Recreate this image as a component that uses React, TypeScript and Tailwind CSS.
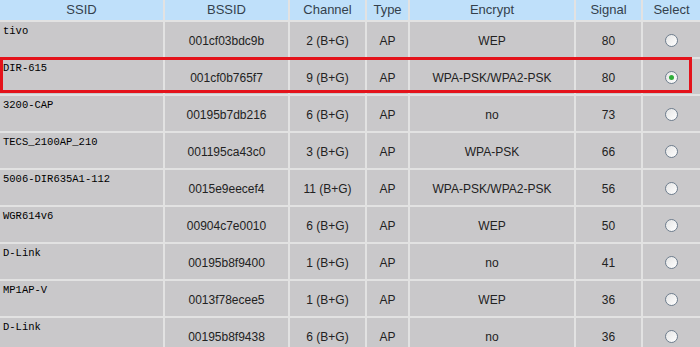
import React from "react";

type Network = {
  ssid: string;
  bssid: string;
  channel: string;
  type: string;
  encrypt: string;
  signal: number;
};

const networks: Network[] = [
  { ssid: "tivo", bssid: "001cf03bdc9b", channel: "2 (B+G)", type: "AP", encrypt: "WEP", signal: 80 },
  { ssid: "DIR-615", bssid: "001cf0b765f7", channel: "9 (B+G)", type: "AP", encrypt: "WPA-PSK/WPA2-PSK", signal: 80 },
  { ssid: "3200-CAP", bssid: "00195b7db216", channel: "6 (B+G)", type: "AP", encrypt: "no", signal: 73 },
  { ssid: "TECS_2100AP_210", bssid: "001195ca43c0", channel: "3 (B+G)", type: "AP", encrypt: "WPA-PSK", signal: 66 },
  { ssid: "5006-DIR635A1-112", bssid: "0015e9eecef4", channel: "11 (B+G)", type: "AP", encrypt: "WPA-PSK/WPA2-PSK", signal: 56 },
  { ssid: "WGR614v6", bssid: "00904c7e0010", channel: "6 (B+G)", type: "AP", encrypt: "WEP", signal: 50 },
  { ssid: "D-Link", bssid: "00195b8f9400", channel: "1 (B+G)", type: "AP", encrypt: "no", signal: 41 },
  { ssid: "MP1AP-V", bssid: "0013f78ecee5", channel: "1 (B+G)", type: "AP", encrypt: "WEP", signal: 36 },
  { ssid: "D-Link", bssid: "00195b8f9438", channel: "6 (B+G)", type: "AP", encrypt: "no", signal: 36 },
];

const headers = ["SSID", "BSSID", "Channel", "Type", "Encrypt", "Signal", "Select"];

function Radio({ checked }: { checked: boolean }) {
  return (
    <span className="flex h-[13px] w-[13px] items-center justify-center rounded-full border border-[#6f7e8e] bg-gradient-to-br from-[#e4e4e4] to-white">
      {checked && <span className="h-[5px] w-[5px] rounded-full bg-[#2fae3a]" />}
    </span>
  );
}

export default function App() {
  const selected = 1;

  return (
    <div className="relative h-[347px] w-[700px] overflow-hidden bg-[#e2e2e2] font-['Liberation_Sans',Arial,sans-serif]">
      <div className="grid grid-cols-[163px_123px_75px_41px_164px_65px_57px] auto-rows-[35px] grid-rows-[20px] gap-[2px]">
        {headers.map((h) => (
          <div
            key={h}
            className="flex items-center justify-center bg-[#bfe0fa] text-[13px] text-[#34404c]"
          >
            {h}
          </div>
        ))}
        {networks.map((n, i) => (
          <React.Fragment key={i}>
            <div className="bg-[#c9c8ca] px-[3px] pt-[3px] font-['Liberation_Mono',monospace] text-[10.5px] leading-[12px] text-black">
              {n.ssid}
            </div>
            <div className="flex items-center justify-center bg-[#c9c8ca] pt-[2px] text-[12px] text-[#222]">
              {n.bssid}
            </div>
            <div className="flex items-center justify-center bg-[#c9c8ca] pt-[2px] text-[12px] text-[#222]">
              {n.channel}
            </div>
            <div className="flex items-center justify-center bg-[#c9c8ca] pt-[2px] text-[12px] text-[#222]">
              {n.type}
            </div>
            <div className="flex items-center justify-center bg-[#c9c8ca] pt-[2px] text-[12px] text-[#222]">
              {n.encrypt}
            </div>
            <div className="flex items-center justify-center bg-[#c9c8ca] pt-[2px] text-[12px] text-[#222]">
              {n.signal}
            </div>
            <div className="flex items-center justify-center bg-[#c9c8ca] pt-[2px]">
              <Radio checked={i === selected} />
            </div>
          </React.Fragment>
        ))}
      </div>
      {/* highlight around the chosen network */}
      <div className="pointer-events-none absolute left-0 top-[57px] h-[36px] w-[692px] border-[3px] border-[#e4131b]" />
    </div>
  );
}
